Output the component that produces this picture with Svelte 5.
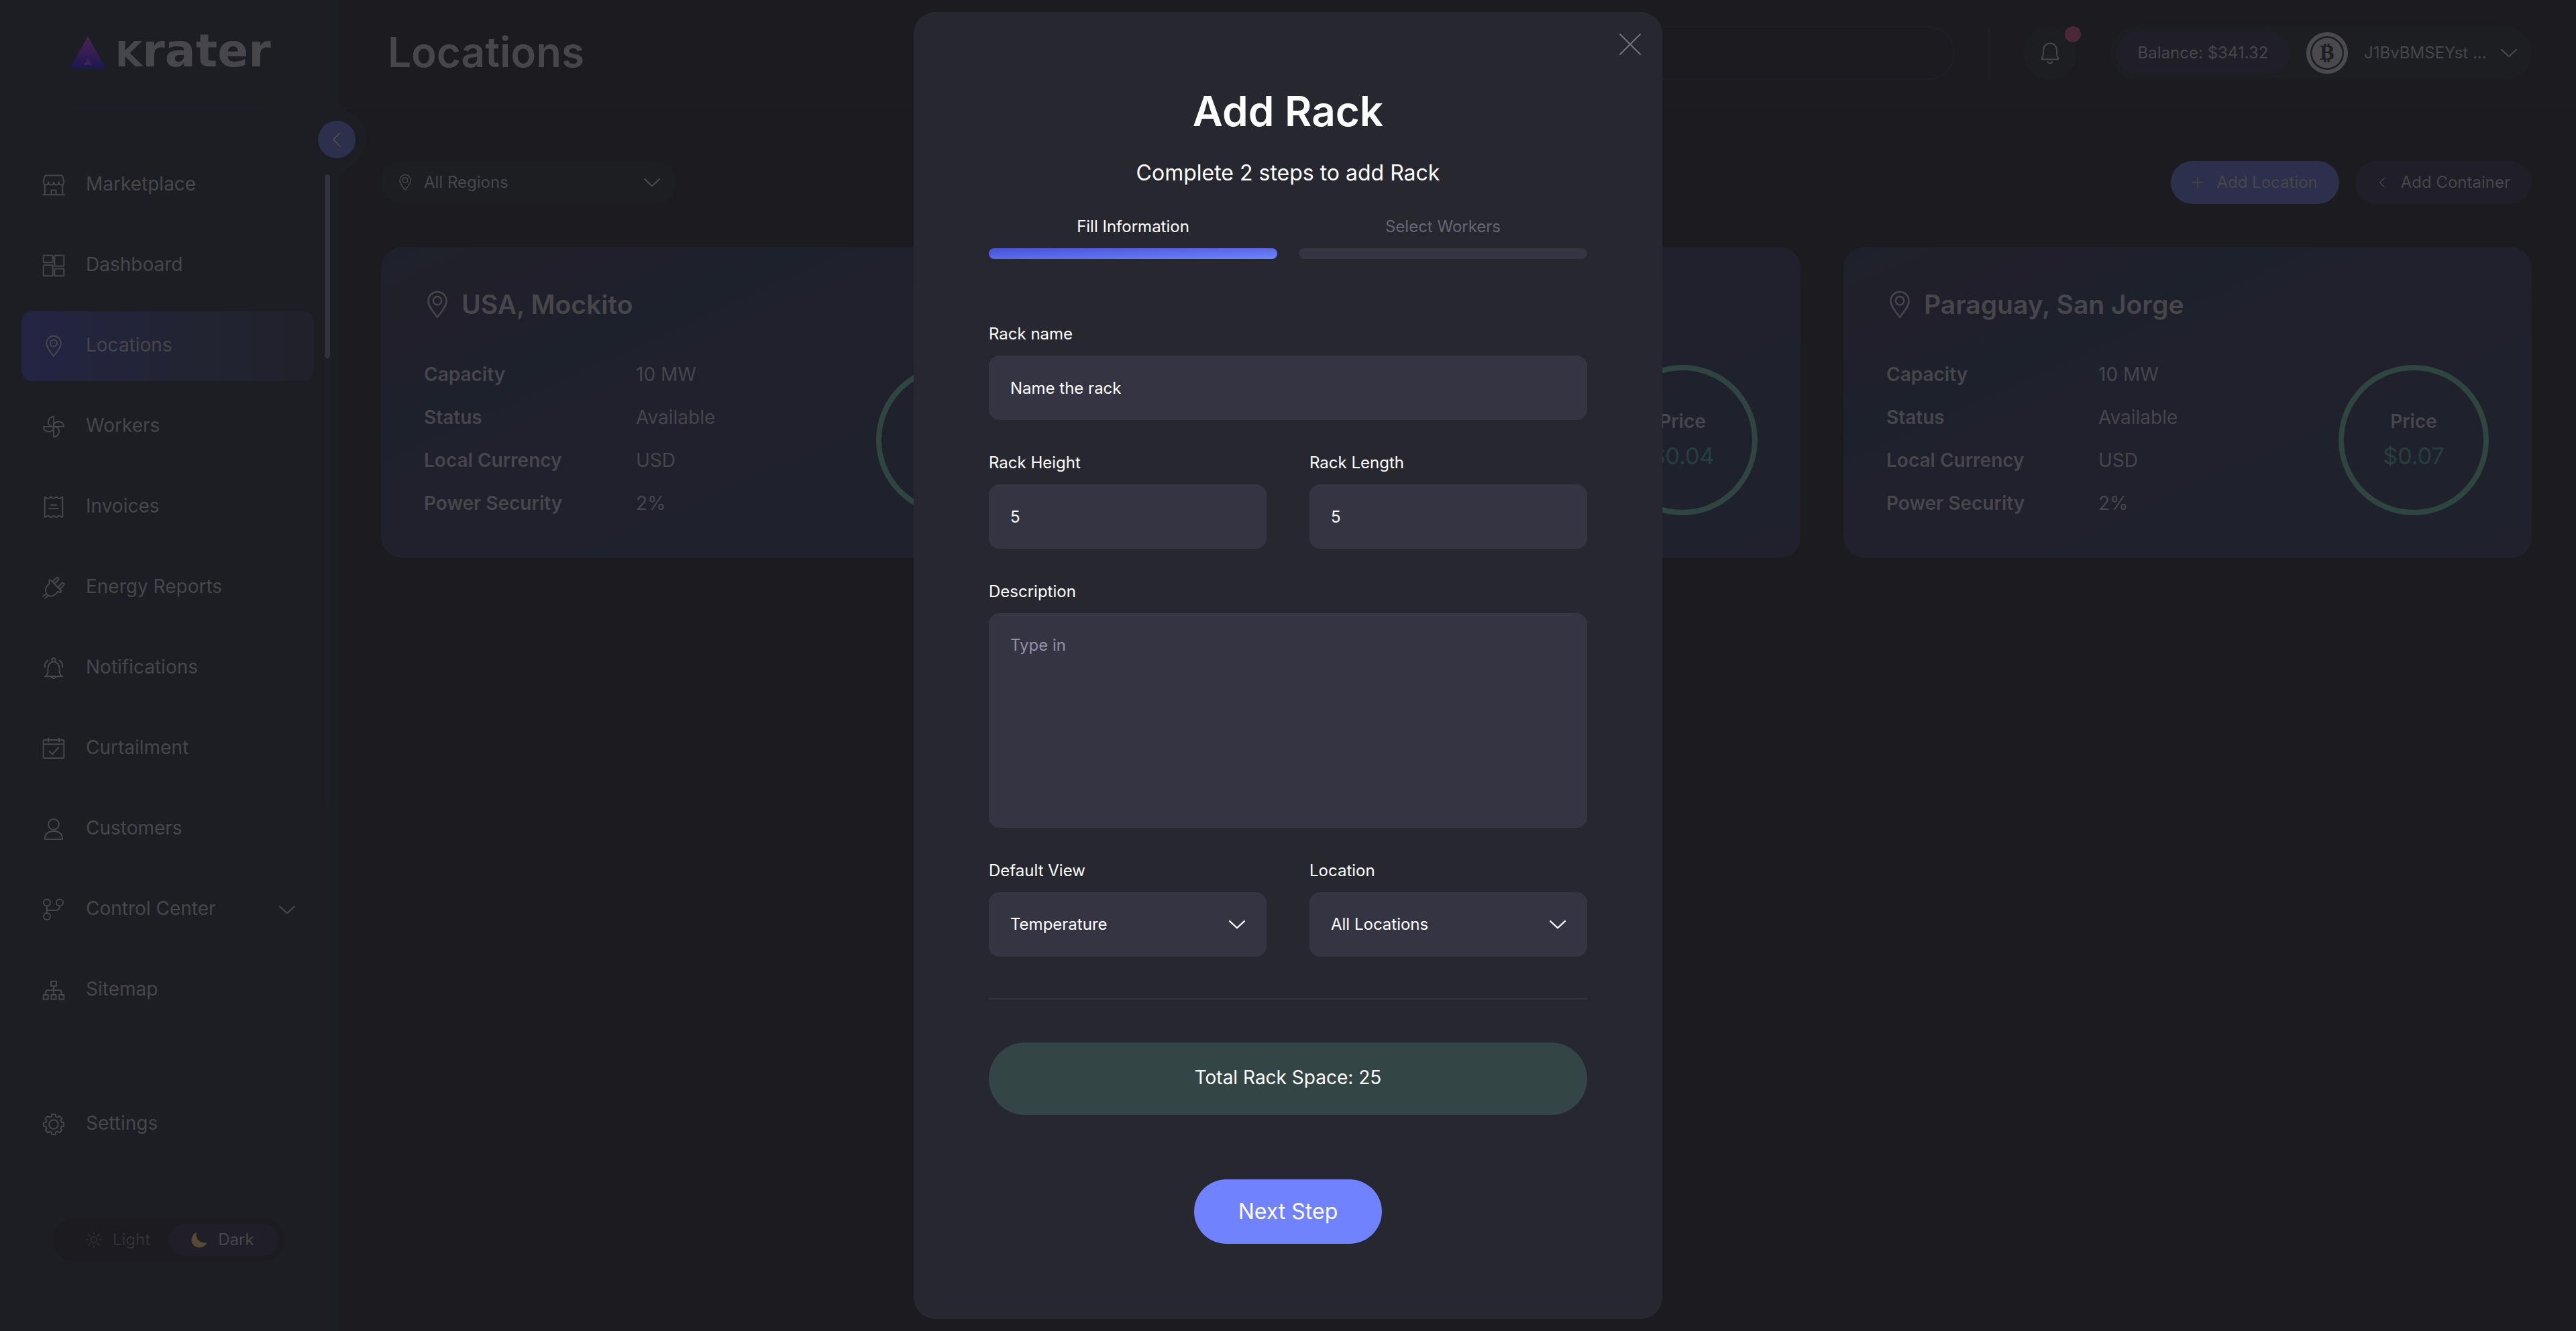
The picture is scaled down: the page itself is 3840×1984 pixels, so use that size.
<script>
  const circle = (cx, cy, r) => `M${cx - r} ${cy}a${r} ${r} 0 1 0 ${2 * r} 0a${r} ${r} 0 1 0 ${-2 * r} 0Z`;

  // Outline of an eight-tooth cog centred in a 32-unit box.
  function gear() {
    const points = [];
    for (let i = 0; i < 8; i++) {
      const mid = (i * Math.PI) / 4;
      for (const [offset, radius] of [[-0.26, 12], [-0.19, 15.2], [0.19, 15.2], [0.26, 12]]) {
        const a = mid + offset;
        points.push(`${(16 + radius * Math.cos(a)).toFixed(2)} ${(16 + radius * Math.sin(a)).toFixed(2)}`);
      }
    }
    return `M${points.join('L')}Z`;
  }

  const pin = 'M16 31.2C12 25.5 5.2 18.5 5.2 11.6a10.8 10.8 0 0 1 21.6 0C26.8 18.5 20 25.5 16 31.2Z' + circle(16, 11.4, 5);

  const icons = {
    store: 'M4.5 1.5h23q1.4 0 1.8 1.4l2 8.1q.3 4.6-3.6 4.6-3.8 0-3.9-4.4-.1 4.4-3.9 4.4T16 11.200q-.1 4.400-3.900 4.400T8.200 11.200q-.1 4.400-3.900 4.400Q.4 15.600.7 11l2-8.100Q3.100 1.500 4.500 1.500ZM2.800 15.500V30M29.200 15.500V30M0 30.200h32M12.500 30v-6.600h7V30',
    grid: 'M1.700.8h12q1 0 1 1v8.500q0 1-1 1h-12q-1 0-1-1V1.800q0-1 1-1ZM18.300.8h12q1 0 1 1V15.800q0 1-1 1h-12q-1 0-1-1V1.800q0-1 1-1ZM1.700 15.300h12q1 0 1 1v14q0 1-1 1h-12q-1 0-1-1v-14q0-1 1-1ZM18.300 20.500h12q1 0 1 1v8.800q0 1-1 1h-12q-1 0-1-1v-8.800q0-1 1-1Z',
    pin,
    fan: 'M16 16V.8C11 .8 8 4.500 8 9s3.500 7 8 7ZM16 16h15.200C31.200 11 27.500 8.500 23 8.500S16 11.500 16 16ZM16 16v15.200c5 0 8-3.700 8-8.200s-3.500-7-8-7ZM16 16H.8c0 5 3.700 7.500 8.200 7.500s7-3 7-7.500Z',
    invoice: 'M2.700 1q2.200 0 3.300 1.700Q9 3.500 10 2T13 1q1.500 2 3 2t3-2q2-.5 3 1t4 .7Q27.100 1 29.300 1v30q-2.200 0-3.300-1.700Q23 28.500 22 30t-3 1q-1.500-2-3-2t-3 2q-2 .5-3-1t-4-.7Q4.900 31 2.700 31ZM12 12.800h8M9.200 18h13.600',
    plug: 'M11.500 4.800 27 20.300q1 1.200-.3 2.200L25.500 23 22 21.800C17 29.500 10 30 6.500 26.500S2.500 14.500 10 9.800L8.900 6.500Q9.800 3.600 11.500 4.800ZM14 7.200l6.200-6q1.700-.8 2.800.4t.2 2.600L17 10.300M22 15.200l6.200-6q1.700-.8 2.800.4t.2 2.600L25 18.300M0 29l5-4M3.200 31.800l5-4',
    alarm: 'M4 28c3.500-2.500 3.500-6 3.500-12a8.500 9.500 0 0 1 17 0c0 6 0 9.500 3.500 12l1.300.3H2.700ZM13.600 6.300v-3q0-2.400 2.400-2.400t2.400 2.400v3M12 28.500q4 5.500 8 0M2.700 14.500Q2.600 7 7.500 4.500M29.300 14.500Q29.400 7 24.500 4.500',
    calendar: 'M2.500 3h27q1.800 0 1.800 1.800v23.400q0 1.800-1.800 1.800h-27Q.7 30 .7 28.200V4.800Q.7 3 2.500 3ZM.7 9.300h30.600M8 .8V5.500M24 .8V5.500M9.500 19.500l4.500 5 9-10',
    user: circle(16, 8.800, 7.900) + 'M2.800 31q.4-12 13.200-12t13.200 12Z',
    branch: circle(6, 5.500, 5) + circle(25, 5.500, 5) + circle(6, 26, 5) + 'M6 10.500V21M6 17h13q6 0 6-6.500',
    sitemap: 'M12 2.800h8v7h-8ZM.8 23h7v6.500h-7ZM12.500 23h7v6.500h-7ZM24.200 23h7v6.500h-7ZM16 9.800V23M4.300 23v-4q0-3 3-3h17.400q3 0 3 3v4',
    gear: gear() + circle(16, 16, 6.800),
    bell: 'M5 25.500c-2-.2-2-1.500-.8-2.600Q6 20.500 6 17v-5.500a10 10 0 0 1 20 0V17q0 3.500 1.800 5.900c1.200 1.100 1.200 2.400-.8 2.600ZM12 29.300q4 4 8 0',
    sun: circle(16, 16, 6) + 'M16 1v4M16 27v4M1 16h4M27 16h4M5.400 5.400l2.800 2.800M23.800 23.800l2.800 2.800M5.400 26.600l2.800-2.800M23.800 8.200l2.800-2.800',
    down: 'M1.500 9.500 16 23 30.500 9.500',
    left: 'M22 3 9 16l13 13',
    plus: 'M16 1v30M1 16h30',
    close: 'M1 1l30 30M31 1 1 31'
  };

  const links = [
    ['Marketplace', 'store'],
    ['Dashboard', 'grid'],
    ['Locations', 'pin'],
    ['Workers', 'fan'],
    ['Invoices', 'invoice'],
    ['Energy Reports', 'plug'],
    ['Notifications', 'alarm'],
    ['Curtailment', 'calendar'],
    ['Customers', 'user'],
    ['Control Center', 'branch'],
    ['Sitemap', 'sitemap']
  ];

  const facts = [
    ['Capacity', '10 MW'],
    ['Status', 'Available'],
    ['Local Currency', 'USD'],
    ['Power Security', '2%']
  ];

  const locations = [
    { name: 'USA, Mockito', facts },
    { facts: [], price: '$0.04' },
    { name: 'Paraguay, San Jorge', facts, price: '$0.07' }
  ];

  let rackName = $state('Name the rack');
  let rackHeight = $state(5);
  let rackLength = $state(5);
  let total = $derived(rackHeight * rackLength);
</script>

{#snippet icon(name, size)}
  <svg class="icon {size} icon-{name}" viewBox="0 0 32 32" aria-hidden="true"><path d={icons[name]} /></svg>
{/snippet}

<div class="app">
  <aside class="sidebar">
    <div class="brand">
      <svg class="mark" viewBox="0 0 54 48" aria-hidden="true">
        <defs>
          <linearGradient id="mark-fill" x1="0" y1="0" x2="0" y2="1">
            <stop offset="0" stop-color="#48244c" />
            <stop offset=".45" stop-color="#381f52" />
            <stop offset="1" stop-color="#1b1850" />
          </linearGradient>
        </defs>
        <path d="M27 0 54 48H0Z" fill="url(#mark-fill)" />
        <path d="M27 32 33 44 27 42 21 44Z" fill="#3f2350" />
      </svg>
      <span class="wordmark">krater</span>
    </div>
    <svg class="bulge" viewBox="0 0 44 136" aria-hidden="true">
      <path d="M0 0C0 14 4 19 14 25C32 35 42 50 42 68S32 101 14 111C4 117 0 122 0 136Z" />
    </svg>
    <button class="collapse" aria-label="Collapse menu">{@render icon('left', 'md')}</button>

    <div class="scroll-area">
      <nav>
        {#each links as [label, name]}
          <a href="#{name}" class:active={label === 'Locations'}>
            {@render icon(name, 'lg')}
            <span>{label}</span>
            {#if label === 'Control Center'}{@render icon('down', 'md')}{/if}
          </a>
        {/each}
      </nav>
      <div class="track"><div class="thumb"></div></div>
    </div>
    <div class="settings">
      <a href="#settings">{@render icon('gear', 'lg')}<span>Settings</span></a>
    </div>
    <fieldset class="theme" aria-label="Theme">
      <label><input type="radio" name="theme" value="light" />{@render icon('sun', 'md')}<span>Light</span></label>
      <label class="on">
        <input type="radio" name="theme" value="dark" checked />
        <svg class="moon" viewBox="0 0 24 24" aria-hidden="true"><path d="M8 1C4 2.500.5 7 .5 12.500.5 19 5.500 23.500 12 23.500c5.500 0 10-3 11.500-7.800C14 18.500 5.500 11 8 1Z" /></svg>
        <span>Dark</span>
      </label>
    </fieldset>
  </aside>

  <main>
    <header>
      <h1>Locations</h1>
      <input class="search" type="search" aria-label="Search" />
      <div class="rule"></div>
      <button class="alerts" aria-label="Notifications">
        {@render icon('bell', 'lg')}
        <i></i>
      </button>
      <div class="account">
        <span class="balance">Balance: $341.32</span>
        <svg class="coin" viewBox="0 0 62 62" aria-hidden="true">
          <circle cx="31" cy="31" r="28" class="ring" />
          <circle cx="31" cy="31" r="22.500" class="disc" />
          <text x="31" y="41" text-anchor="middle">B</text>
          <path d="M28 17v5M33 17v5M28 40v5M33 40v5" />
        </svg>
        <button class="wallet"><span>J1BvBMSEYst ...</span>{@render icon('down', 'md')}</button>
      </div>
    </header>

    <div class="content">
      <div class="toolbar">
        <div class="region">
          {@render icon('pin', 'md')}
          <select aria-label="Region"><option>All Regions</option></select>
          {@render icon('down', 'md')}
        </div>
        <div class="actions">
          <button class="pill primary">{@render icon('plus', 'sm')}<span>Add Location</span></button>
          <button class="pill">{@render icon('left', 'sm')}<span>Add Container</span></button>
        </div>
      </div>

      <div class="cards">
        {#each locations as place}
          <article>
            <h2>{@render icon('pin', 'xl')}{place.name ?? ''}</h2>
            <div class="details">
              <dl>
                {#each place.facts as [term, value]}
                  <dt>{term}</dt>
                  <dd>{value}</dd>
                {/each}
              </dl>
              <div class="price"><span>Price</span><strong>{place.price ?? ''}</strong></div>
            </div>
          </article>
        {/each}
      </div>
    </div>
  </main>
</div>

<div class="overlay">
  <div class="modal" role="dialog" aria-modal="true" aria-labelledby="modal-title">
    <button class="close" aria-label="Close">{@render icon('close', 'lg')}</button>
    <h2 id="modal-title">Add Rack</h2>
    <p class="lead">Complete 2 steps to add Rack</p>
    <ol class="steps">
      <li class="current"><span>Fill Information</span><div class="bar"></div></li>
      <li><span>Select Workers</span><div class="bar"></div></li>
    </ol>
    <form onsubmit={(e) => e.preventDefault()}>
      <div class="field wide">
        <label for="rack-name">Rack name</label>
        <input id="rack-name" type="text" bind:value={rackName} />
      </div>
      <div class="field">
        <label for="rack-height">Rack Height</label>
        <input id="rack-height" type="number" bind:value={rackHeight} />
      </div>
      <div class="field">
        <label for="rack-length">Rack Length</label>
        <input id="rack-length" type="number" bind:value={rackLength} />
      </div>
      <div class="field wide">
        <label for="description">Description</label>
        <textarea id="description" placeholder="Type in"></textarea>
      </div>
      <div class="field">
        <label for="view">Default View</label>
        <div class="select">
          <select id="view"><option>Temperature</option></select>
          {@render icon('down', 'md')}
        </div>
      </div>
      <div class="field">
        <label for="location">Location</label>
        <div class="select">
          <select id="location"><option>All Locations</option></select>
          {@render icon('down', 'md')}
        </div>
      </div>
      <div class="total wide">Total Rack Space: {total}</div>
      <button class="next wide" type="submit">Next Step</button>
    </form>
  </div>
</div>

<style>
  :global(body) {
    background: #1c1b20;
    font-family: Inter, 'Liberation Sans', sans-serif;
    font-size: 24px;
    line-height: 32px;
    color: #47464b;
  }
  * {
    box-sizing: border-box;
  }
  button, input, select, textarea {
    font: inherit;
    color: inherit;
    background: none;
    border: 0;
    margin: 0;
    padding: 0;
    outline: 0;
    appearance: none;
  }
  a {
    color: inherit;
    text-decoration: none;
  }
  h1, h2, p, ol, dl, dd, fieldset {
    margin: 0;
    padding: 0;
    border: 0;
    font-weight: 400;
  }
  .icon {
    flex: none;
    width: 32px;
    height: 32px;
    fill: none;
    stroke: currentColor;
    stroke-width: 2;
    stroke-linecap: round;
    stroke-linejoin: round;
    overflow: visible;
  }
  .icon.sm {
    width: 16px;
    height: 16px;
    stroke-width: 3;
  }
  .icon.md {
    width: 24px;
    height: 24px;
  }
  .icon.md.icon-down, .icon.md.icon-left {
    stroke-width: 3;
  }
  .icon.xl {
    width: 40px;
    height: 40px;
  }

  .app {
    display: grid;
    grid-template-columns: 504px minmax(0, 1fr);
    min-height: 100vh;
  }

  .sidebar {
    position: relative;
    background: #1d1e23;
  }
  .brand {
    display: flex;
    align-items: center;
    gap: 14px;
    height: 162px;
    margin: 0 112px 62px;
    padding-bottom: 4px;
    border-bottom: 2px solid #1e1e26;
  }
  .mark {
    flex: none;
    width: 54px;
    height: 48px;
    margin-left: -8px;
  }
  .wordmark {
    display: block;
    font-family: 'DejaVu Sans', sans-serif;
    font-size: 68px;
    font-weight: 700;
    line-height: 72px;
  }
  .wordmark::first-letter {
    font-size: 52px;
    text-transform: uppercase;
  }
  .bulge {
    position: absolute;
    left: 100%;
    top: 140px;
    width: 44px;
    height: 136px;
    fill: #1d1e23;
  }
  .collapse {
    position: absolute;
    right: -26px;
    top: 180px;
    display: grid;
    place-items: center;
    width: 56px;
    height: 56px;
    border-radius: 50%;
    background: #2d304c;
  }
  .scroll-area {
    display: grid;
    grid-template-columns: 1fr 8px;
    gap: 16px;
    padding: 0 12px 0 32px;
  }
  nav {
    display: grid;
    gap: 16px;
  }
  nav a, .settings a {
    display: flex;
    align-items: center;
    gap: 32px;
    height: 104px;
    padding: 0 28px 0 32px;
    border-radius: 16px;
    font-size: 28px;
  }
  nav a span, .settings a span {
    flex: 1;
    padding-bottom: 4px;
  }
  nav a.active {
    background: linear-gradient(90deg, #242444, #222433 55%, #21212b);
  }
  .track {
    height: 938px;
    margin-top: 36px;
    border-radius: 4px;
    background: #1f1e28;
  }
  .thumb {
    height: 274px;
    border-radius: 4px;
    background: #33333f;
  }
  .settings {
    margin: 46px 60px 0;
    padding-top: 48px;
    border-top: 2px solid #1e1e24;
  }
  .settings a {
    padding: 0 4px;
  }
  .theme {
    display: grid;
    grid-template-columns: 1fr 164px;
    width: 344px;
    margin: 88px 0 40px 80px;
    padding: 8px;
    border-radius: 32px;
    background: #1c1b20;
  }
  .theme label {
    display: flex;
    align-items: center;
    justify-content: center;
    gap: 16px;
    height: 48px;
    padding-left: 12px;
    border-radius: 24px;
    color: #323237;
  }
  .theme input {
    position: absolute;
    opacity: 0;
  }
  .theme .on {
    padding: 0 4px 0 0;
    background: #201f28;
    color: #47464b;
  }
  .moon {
    width: 24px;
    height: 24px;
    fill: #564b36;
  }

  header {
    display: flex;
    align-items: center;
    gap: 50px;
    height: 162px;
    padding: 0 66px 2px 74px;
    border-bottom: 2px solid #1d1d22;
  }
  h1 {
    flex: 1;
    padding-bottom: 2px;
    font-size: 62px;
    line-height: 80px;
    font-weight: 600;
  }
  .search {
    width: 720px;
    height: 80px;
    padding: 0 40px;
    border: 2px solid #1f1f26;
    border-radius: 40px;
  }
  .rule {
    width: 2px;
    height: 80px;
    background: #1f1f25;
  }
  .alerts {
    position: relative;
    display: grid;
    place-items: center;
    width: 80px;
    height: 80px;
    border-radius: 50%;
    background: #1d1e22;
  }
  .alerts i {
    position: absolute;
    right: -6px;
    top: 0;
    width: 24px;
    height: 24px;
    border-radius: 50%;
    background: #4b2838;
  }
  .account {
    display: flex;
    align-items: center;
    gap: 24px;
    width: 628px;
    height: 80px;
    padding: 0 22px 0 8px;
    border-radius: 40px;
    background: #1d1e22;
  }
  .balance {
    flex: none;
    width: 260px;
    padding: 16px 0;
    border-radius: 32px;
    background: #201f28;
    text-align: center;
  }
  .coin {
    flex: none;
    width: 62px;
    height: 62px;
  }
  .coin .ring {
    fill: none;
    stroke: #4a494e;
    stroke-width: 6;
  }
  .coin .disc {
    fill: #4a494e;
  }
  .coin text {
    fill: #1d1e22;
    font: 700 27px 'DejaVu Serif', serif;
  }
  .coin path {
    stroke: #1d1e22;
    stroke-width: 3;
  }
  .wallet {
    flex: 1;
    display: flex;
    align-items: center;
    justify-content: space-between;
  }

  .content {
    padding: 78px 66px 64px 64px;
  }
  .toolbar, .actions {
    display: flex;
    justify-content: space-between;
    gap: 24px;
  }
  .toolbar {
    margin-bottom: 64px;
  }
  .region {
    display: flex;
    align-items: center;
    gap: 16px;
    width: 440px;
    height: 64px;
    padding: 0 24px;
    border-radius: 32px;
    background: #1d1e22;
  }
  .region select {
    flex: 1;
  }
  .pill {
    display: flex;
    align-items: center;
    gap: 20px;
    height: 64px;
    padding: 0 32px;
    border-radius: 32px;
    background: #201f28;
  }
  .pill.primary {
    background: #2d304c;
  }

  .cards {
    display: grid;
    grid-template-columns: repeat(3, minmax(0, 1fr));
    gap: 64px;
  }
  article {
    padding: 62px 64px 64px;
    border-radius: 32px;
    background: linear-gradient(to bottom right, #1d212b, #20202b 8%, #201f2b 18%, #1d212b 30%, #21202d 46%, #21202d 56%, #1f212c 66%, #1f212c 90%, #21212d);
  }
  article h2 {
    display: flex;
    align-items: center;
    gap: 16px;
    min-height: 48px;
    font-size: 39px;
    line-height: 48px;
    font-weight: 600;
  }
  .details {
    display: flex;
    align-items: flex-end;
    justify-content: space-between;
    margin-top: 64px;
  }
  dl {
    display: grid;
    grid-template-columns: 316px auto;
    row-gap: 32px;
    min-height: 226px;
    padding-bottom: 2px;
    font-size: 28px;
  }
  dt {
    font-weight: 600;
  }
  .price {
    display: flex;
    flex-direction: column;
    align-items: center;
    justify-content: center;
    gap: 16px;
    width: 224px;
    height: 224px;
    border: 8px solid #2f4640;
    border-radius: 50%;
    font-size: 28px;
    font-weight: 600;
  }
  .price strong {
    min-height: 40px;
    font-size: 34px;
    line-height: 40px;
    font-weight: 400;
    color: #25403c;
  }

  .overlay {
    position: fixed;
    inset: 0;
    display: grid;
    place-items: center;
    overflow: auto;
  }
  .modal {
    position: relative;
    width: min(1116px, 100%);
    padding: 108px 112px 112px;
    border-radius: 32px;
    background: #272730;
    color: #fff;
  }
  .close {
    position: absolute;
    top: 32px;
    right: 32px;
    height: 32px;
    color: #737380;
  }
  .modal h2 {
    font-size: 62px;
    line-height: 80px;
    font-weight: 600;
    text-align: center;
  }
  .lead {
    margin-top: 32px;
    font-size: 32px;
    line-height: 40px;
    text-align: center;
  }
  .steps {
    display: grid;
    grid-template-columns: 1fr 1fr;
    gap: 32px;
    margin: 44px 0 96px;
    list-style: none;
    text-align: center;
    color: #666674;
  }
  .steps .current {
    color: #fff;
  }
  .bar {
    height: 16px;
    margin-top: 16px;
    border-radius: 8px;
    background: #353442;
  }
  .current .bar {
    background: linear-gradient(to bottom right, #4353d4, #7182ff);
  }
  form {
    display: grid;
    grid-template-columns: 1fr 1fr;
    gap: 48px 64px;
  }
  .wide {
    grid-column: 1 / -1;
  }
  .field {
    display: grid;
    gap: 16px;
  }
  .field input, .field textarea, .field select {
    display: block;
    width: 100%;
    height: 96px;
    padding: 0 32px;
    border-radius: 16px;
    background: #353442;
  }
  .field input {
    appearance: textfield;
  }
  .field textarea {
    height: 320px;
    padding: 32px;
    resize: none;
  }
  textarea::placeholder {
    color: #9291a5;
    opacity: 1;
  }
  .select {
    display: grid;
    align-items: center;
  }
  .select > :global(*) {
    grid-area: 1 / 1;
  }
  .select .icon {
    justify-self: end;
    margin-right: 32px;
    pointer-events: none;
  }
  .total {
    position: relative;
    margin-top: 80px;
    padding: 36px 0 40px;
    border-radius: 54px;
    background: #344546;
    font-size: 28px;
    text-align: center;
  }
  .total::before {
    content: '';
    position: absolute;
    inset: -66px 0 auto;
    height: 2px;
    background: #353442;
  }
  .next {
    justify-self: center;
    width: 280px;
    height: 96px;
    margin-top: 48px;
    border-radius: 48px;
    background: #7182ff;
    font-size: 32px;
  }
</style>
